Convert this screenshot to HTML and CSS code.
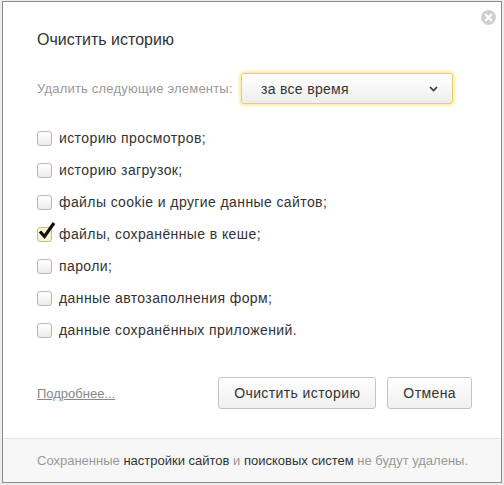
FILE: index.html
```html
<!DOCTYPE html>
<html lang="ru">
<head>
<meta charset="utf-8">
<link rel="stylesheet" href="styles.css">
</head>
<body>
<div class="dialog">
  <button class="close" aria-label="Закрыть">
    <svg width="15" height="15" viewBox="0 0 15 15"><circle cx="7.5" cy="7.5" r="7.5" fill="#d0d0d0"/><path d="M4.8 4.8 L10.2 10.2 M10.2 4.8 L4.8 10.2" stroke="#fff" stroke-width="2.2" stroke-linecap="round"/></svg>
  </button>
  <div class="main">
    <h1 class="title">Очистить историю</h1>
    <div class="period">
      <span class="period-label">Удалить следующие элементы:</span>
      <div class="select">
        <span>за все время</span>
        <svg class="chev" width="9" height="6" viewBox="0 0 9 6"><path d="M1 1 L4.5 4.5 L8 1" fill="none" stroke="#333" stroke-width="1.6"/></svg>
      </div>
    </div>
    <ul class="items">
      <li><span class="cb"></span>историю просмотров;</li>
      <li><span class="cb"></span>историю загрузок;</li>
      <li><span class="cb"></span>файлы cookie и другие данные сайтов;</li>
      <li><span class="cb checked"><svg class="tick" width="20" height="19" viewBox="0 0 20 19"><path d="M3 10.5 L7.5 15.5 L17 2" fill="none" stroke="#111" stroke-width="3.2" stroke-linejoin="miter"/></svg></span>файлы, сохранённые в кеше;</li>
      <li><span class="cb"></span>пароли;</li>
      <li><span class="cb"></span>данные автозаполнения форм;</li>
      <li><span class="cb"></span>данные сохранённых приложений.</li>
    </ul>
    <div class="actions">
      <a class="more" href="#">Подробнее...</a>
      <div class="buttons">
        <button class="btn">Очистить историю</button>
        <button class="btn">Отмена</button>
      </div>
    </div>
  </div>
  <div class="footer">Сохраненные <span class="dark">настройки сайтов</span> и <span class="dark">поисковых систем</span> не будут удалены.</div>
</div>
</body>
</html>
```

FILE: styles.css
```css
* {
  box-sizing: border-box;
}
html, body {
  margin: 0;
  padding: 0;
}
body {
  background: #ececec;
  font-family: "Liberation Sans", Arial, sans-serif;
  color: #333;
  padding: 1px 2px 2px 2px;
}
.dialog {
  position: relative;
  width: 500px;
  height: 482px;
  border: 1px solid #8c8c8c;
  background: #fff;
  display: flex;
  flex-direction: column;
}
.close {
  position: absolute;
  top: 8px;
  right: 5px;
  width: 15px;
  height: 15px;
  padding: 0;
  border: 0;
  background: none;
  line-height: 0;
}
.main {
  flex: 1;
  padding: 0 0 0 34px;
}
.title {
  margin: 28px 0 0 0;
  font-size: 16px;
  font-weight: normal;
  line-height: 20px;
  color: #333;
}
.period {
  display: flex;
  align-items: center;
  margin-top: 23px;
}
.period-label {
  font-size: 13px;
  letter-spacing: 0.2px;
  color: #999;
  width: 204px;
}
.select {
  width: 212px;
  height: 31px;
  border: 1px solid #e9cf6c;
  border-radius: 3px;
  box-shadow: 0 0 3px 2px #fbeeaa;
  background: linear-gradient(#fff, #eee);
  display: flex;
  align-items: center;
  justify-content: space-between;
  padding: 0 14px 0 19px;
  font-size: 14px;
  letter-spacing: 0.3px;
  color: #333;
}
.chev {
  display: block;
}
.items {
  list-style: none;
  margin: 18px 0 0 0;
  padding: 0;
}
.items li {
  display: flex;
  align-items: center;
  height: 32px;
  font-size: 14px;
  letter-spacing: 0.4px;
  color: #333;
}
.cb {
  position: relative;
  width: 15px;
  height: 15px;
  border: 1px solid #b8b8b8;
  border-radius: 3px;
  background: linear-gradient(#fff, #ececec);
  margin-right: 7px;
  flex: none;
}
.cb.checked {
  background: #fbf4d2;
  border-color: #c9bc8c;
}
.tick {
  position: absolute;
  left: -1px;
  top: -7px;
}
.actions {
  display: flex;
  align-items: center;
  justify-content: space-between;
  margin-top: 31px;
  padding-right: 29px;
}
.more {
  font-size: 13px;
  color: #888;
  text-decoration: underline;
}
.buttons {
  display: flex;
  gap: 11px;
}
.btn {
  height: 32px;
  border: 1px solid #c4c4c4;
  border-radius: 3px;
  background: linear-gradient(#fff, #f0f0f0);
  font-family: "Liberation Sans", Arial, sans-serif;
  font-size: 14px;
  letter-spacing: 0.4px;
  color: #333;
  padding: 0 15px;
}
.footer {
  height: 44px;
  border-top: 1px solid #e6e6e6;
  background: #f7f7f7;
  padding-left: 34px;
  font-size: 13px;
  line-height: 43px;
  color: #999;
  white-space: nowrap;
}
.dark {
  color: #333;
}
```
